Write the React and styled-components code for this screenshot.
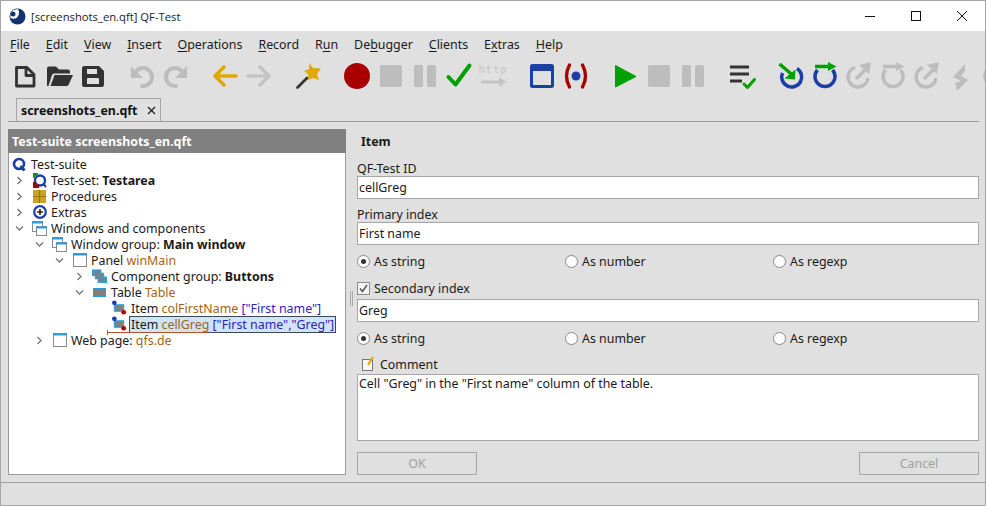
import React from 'react';
import styled, { createGlobalStyle } from 'styled-components';

const GlobalStyle = createGlobalStyle`
    html, body {
        margin: 0;
        padding: 0;
        background: #e0e0e0;
    }
    * {
        box-sizing: border-box;
    }
`
const Window = styled.div`
    width: 986px;
    height: 506px;
    display: flex;
    flex-direction: column;
    border: 1px solid #a6a6a6;
    overflow: hidden;
    background: #e0e0e0;
    color: #1a1a1a;
    font-family: 'Noto Sans', sans-serif;
    font-size: 12.4px;
`
const TitleBar = styled.div`
    height: 30px;
    flex: none;
    display: flex;
    align-items: center;
    background: #fff;
    padding-left: 8px;
    font-family: 'Open Sans', sans-serif;
    font-size: 11.25px;
    color: #222;
`
const TitleText = styled.span`
    margin-left: 5px;
    flex: 1;
`
const WinButton = styled.div`
    width: 46px;
    height: 30px;
    display: flex;
    align-items: center;
    justify-content: center;
`
const MenuBar = styled.div`
    height: 27px;
    flex: none;
    display: flex;
    align-items: center;
    padding: 0 0 1px 9px;
    gap: 16px;
`
const MenuItem = styled.span`
    u {
        text-underline-offset: 2px;
    }
`
const Toolbar = styled.div`
    height: 36px;
    flex: none;
    display: flex;
    align-items: center;
    padding-left: 7px;
    gap: 15px;
    overflow: hidden;
`
const ToolGroup = styled.div`
    display: flex;
    flex: none;
`
const ToolSlot = styled.div`
    width: 34px;
    height: 34px;
    flex: none;
    display: flex;
    align-items: center;
    justify-content: center;
`
const TabBar = styled.div`
    height: 25px;
    flex: none;
    margin: 3px 6px 0 7px;
    padding-left: 8px;
    display: flex;
    align-items: flex-end;
    border-bottom: 1px solid #9a9a9a;
`
const Tab = styled.div`
    width: 145px;
    height: 23px;
    display: flex;
    align-items: center;
    justify-content: space-between;
    padding: 0 4px 0 4px;
    border: 1px solid #a6a6a6;
    border-bottom: none;
    font-weight: 700;
    color: #111;
`
const Main = styled.div`
    flex: 1;
    min-height: 0;
    display: flex;
    padding: 7px 6px 7px 7px;
`
const TreePanel = styled.div`
    width: 338px;
    flex: none;
    display: flex;
    flex-direction: column;
`
const TreeHeader = styled.div`
    height: 24px;
    flex: none;
    background: #808080;
    color: #fff;
    font-weight: 700;
    display: flex;
    align-items: center;
    padding-left: 4px;
`
const TreeBody = styled.div`
    flex: 1;
    background: #fff;
    border: 1px solid #9a9a9a;
    border-top: none;
    padding: 3px 0 0 3px;
`
const Row = styled.div`
    position: relative;
    height: 16px;
    display: flex;
    align-items: center;
    padding-left: ${p => p.$level * 20}px;
    white-space: nowrap;
`
const Chevron = styled.span`
    width: 20px;
    height: 16px;
    flex: none;
    margin-left: -20px;
    padding-right: 6px;
    display: flex;
    align-items: center;
    justify-content: center;
`
const NodeIcon = styled.span`
    width: 15px;
    height: 16px;
    flex: none;
    display: flex;
    align-items: center;
    justify-content: center;
    margin-right: 4px;
`
const Label = styled.span`
    display: inline-block;
    line-height: 15px;
    padding: 0 ${p => (p.$selected ? '1px' : '0')};
    margin-left: ${p => (p.$selected ? '-1px' : '0')};
    background: ${p => (p.$selected ? '#cfe4f7' : 'transparent')};
    outline: ${p => (p.$selected ? '1px solid #3a4a5a' : 'none')};
`
const Ref = styled.span`
    color: #a5630f;
`
const Extra = styled.span`
    color: #3320c4;
`
const DropLine = styled.div`
    position: absolute;
    left: 95px;
    top: 16px;
    width: 101px;
    height: 1px;
    background: #c0502a;
    &::before {
        content: '';
        position: absolute;
        left: 0;
        top: -2px;
        width: 1px;
        height: 5px;
        background: #c0502a;
    }
`
const Splitter = styled.div`
    width: 11px;
    flex: none;
    display: flex;
    align-items: center;
    justify-content: center;
    gap: 1px;
    padding-bottom: 8px;
    span {
        width: 1px;
        height: 15px;
        background: #aaa;
    }
`
const Form = styled.div`
    flex: 1;
    min-width: 0;
    display: flex;
    flex-direction: column;
`
const FormTitle = styled.div`
    height: 24px;
    padding-left: 4px;
    display: flex;
    align-items: center;
    font-weight: 700;
`
const FieldLabel = styled.div`
    height: ${p => p.$h || 23}px;
    flex: none;
    display: flex;
    align-items: center;
    gap: 4px;
    padding-left: ${p => (p.$indent ? '5px' : '0')};
    padding-top: ${p => p.$top || 0}px;
`
const TextInput = styled.div`
    height: 23px;
    flex: none;
    display: flex;
    align-items: center;
    background: #fff;
    border: 1px solid #a6a6a6;
    padding-left: 1px;
`
const CheckBox = styled.span`
    width: 13px;
    height: 13px;
    flex: none;
    display: flex;
    align-items: center;
    justify-content: center;
    border: 1px solid #8a8a8a;
    background: #f4f4f4;
`
const RadioRow = styled.div`
    height: 32px;
    flex: none;
    display: grid;
    grid-template-columns: 208px 208px 206px;
    align-items: center;
`
const RadioOption = styled.label`
    display: flex;
    align-items: center;
    gap: 4px;
`
const RadioDot = styled.span`
    width: 13px;
    height: 13px;
    flex: none;
    border-radius: 50%;
    border: 1px solid #8a8a8a;
    background: #fff;
    display: flex;
    align-items: center;
    justify-content: center;
    &::after {
        content: '';
        width: 5px;
        height: 5px;
        border-radius: 50%;
        background: ${p => (p.$on ? '#333' : 'transparent')};
    }
`
const TextArea = styled.div`
    height: 67px;
    flex: none;
    background: #fff;
    border: 1px solid #a6a6a6;
    padding: 1px;
    line-height: 16px;
`
const ButtonRow = styled.div`
    margin-top: 11px;
    display: flex;
    justify-content: space-between;
`
const FormButton = styled.div`
    width: 120px;
    height: 23px;
    display: flex;
    align-items: center;
    justify-content: center;
    border: 1px solid #a6a6a6;
    color: #a0a0a0;
`
const StatusBar = styled.div`
    height: 23px;
    flex: none;
    border-top: 1px solid #a0a0a0;
`
const HttpText = styled.text`
    font-family: 'DejaVu Sans Mono', monospace;
    font-size: 10px;
    fill: #c4c4c4;
`

const BLUE = '#1b3fa6';
const GREEN = '#00a000';
const DARK = '#333';
const GRAY = '#bdbdbd';
const GOLD = '#e0a800';
const RED = '#a80000';

const Svg = ({ children }) => (
    <svg width="34" height="34" viewBox="0 0 34 34" fill="none">{children}</svg>
)

const NewFile = () => (
    <Svg>
        <path d="M8.500 8.500h10.500l7 7V27H8.500z M18 8.500v8h8" stroke={DARK} strokeWidth="2.800" strokeLinejoin="round" />
    </Svg>
)
const OpenFolder = () => (
    <Svg>
        <path d="M5 27V9.500q0-2 2-2h7l3 3h9q2 0 2 2v2H12q-1.500 0-2 1.500L6.500 27z" fill={DARK} />
        <path d="M12.500 16H31l-4.500 10q-.5 1-2 1H8.500z" fill={DARK} />
    </Svg>
)
const SaveDisk = () => (
    <Svg>
        <path fillRule="evenodd" fill={DARK} d="M6 9q0-2 2-2h15l5 5v14q0 2-2 2H8q-2 0-2-2zM11 10v5h10v-5zM12 19q-1 0-1 1v5h12v-5q0-1-1-1z" />
    </Svg>
)
const Undo = ({ flip }) => (
    <Svg>
        <g transform={flip ? 'matrix(-1 0 0 1 34 0)' : undefined}>
            <path d="M11 12.500Q14 9 18 9A9 9 0 1 1 18 27H15.500" stroke={GRAY} strokeWidth="4" />
            <path d="M6 7v12h12z" fill={GRAY} />
        </g>
    </Svg>
)
const Arrow = ({ color, flip }) => (
    <Svg>
        <g transform={flip ? 'matrix(-1 0 0 1 34 0)' : undefined} stroke={color} strokeWidth="3.600" strokeLinecap="round" strokeLinejoin="round">
            <path d="M7 17h21M16 8l-9 9 9 9" />
        </g>
    </Svg>
)
const Wand = () => (
    <Svg>
        <path d="M6.500 28.500 16 19" stroke={DARK} strokeWidth="2.800" strokeLinecap="round" />
        <path d="M18.500 4 22 9l8 .5-4 5.500 2 6-6-2-5 2 .5-5.500L13 12l5-2z" fill={GOLD} />
    </Svg>
)
const Record = () => (
    <Svg><circle cx="17" cy="17" r="13" fill={RED} /></Svg>
)
const Stop = () => (
    <Svg><rect x="6" y="6" width="22" height="22" rx="2" fill={GRAY} /></Svg>
)
const Pause = () => (
    <Svg>
        <rect x="6" y="6" width="9" height="22" rx="1.500" fill={GRAY} />
        <rect x="19" y="6" width="9" height="22" rx="1.500" fill={GRAY} />
    </Svg>
)
const Check = () => (
    <Svg>
        <path d="M6.500 18l7 7.500L27.500 6.500" stroke={GREEN} strokeWidth="4" strokeLinecap="round" strokeLinejoin="round" />
    </Svg>
)
const Http = () => (
    <Svg>
        <HttpText x="2.500" y="14" textLength="28">http</HttpText>
        <path d="M5 23h20" stroke="#c4c4c4" strokeWidth="3" />
        <path d="M23 18l7 5-7 5z" fill="#c4c4c4" />
    </Svg>
)
const WindowIcon = () => (
    <Svg>
        <rect x="6.500" y="6.500" width="21" height="21" rx="1" stroke={BLUE} strokeWidth="3" />
        <rect x="6" y="6" width="22" height="6" fill={BLUE} />
    </Svg>
)
const Broadcast = () => (
    <Svg>
        <path d="M10.500 6q-6 11 0 22M23.500 6q6 11 0 22" stroke={RED} strokeWidth="3.400" strokeLinecap="round" />
        <circle cx="17" cy="17" r="4.500" fill={BLUE} />
    </Svg>
)
const Play = () => (
    <Svg><path d="M7.500 6.500 28 17.500 7.500 28z" fill={GREEN} stroke={GREEN} strokeLinejoin="round" /></Svg>
)
const ListCheck = () => (
    <Svg>
        <path d="M5 8h19M5 15h19M5 22h12" stroke={DARK} strokeWidth="3" />
        <path d="M19 25l3.500 3.500 7-8" stroke={GREEN} strokeWidth="3" strokeLinecap="round" strokeLinejoin="round" />
    </Svg>
)
const StepIn = () => (
    <Svg>
        <path d="M23 9.500A10 10 0 1 1 8.500 14" stroke={BLUE} strokeWidth="3.500" />
        <path d="M5.500 5l13 11" stroke={GREEN} strokeWidth="3.500" />
        <path d="M21.500 10.500 21 20.500l-10.500-1z" fill={GREEN} />
    </Svg>
)
const StepOver = ({ color = BLUE, arrow = GREEN }) => (
    <Svg>
        <path d="M9.500 11A10 10 0 1 0 24.500 11" stroke={color} strokeWidth="3.500" />
        <path d="M7 7.500h14" stroke={arrow} strokeWidth="3.500" />
        <path d="M20 3l8.500 4.500L20 12z" fill={arrow} />
    </Svg>
)
const StepOut = () => (
    <Svg>
        <path d="M13 8.500A10 10 0 1 0 26 19" stroke={GRAY} strokeWidth="3.500" />
        <path d="M14 20 26 8" stroke={GRAY} strokeWidth="3.500" />
        <path d="M17 6l12-3-2 12z" fill={GRAY} />
    </Svg>
)
const Bolt = () => (
    <Svg>
        <path d="M21 5 9 18l8 4-6 2 2 8 11-11-7-4 4-5z" fill={GRAY} />
    </Svg>
)
const CutOff = () => (
    <Svg><circle cx="17" cy="17" r="10" stroke={GRAY} strokeWidth="3.500" /></Svg>
)

const toolGroups = [
    [<NewFile />, <OpenFolder />, <SaveDisk />],
    [<Undo />, <Undo flip />],
    [<Arrow color={GOLD} />, <Arrow color="#c4c4c4" flip />],
    [<Wand />],
    [<Record />, <Stop />, <Pause />, <Check />, <Http />],
    [<WindowIcon />, <Broadcast />],
    [<Play />, <Stop />, <Pause />],
    [<ListCheck />],
    [<StepIn />, <StepOver />, <StepOut />, <StepOver color={GRAY} arrow={GRAY} />, <StepOut />, <Bolt />, <CutOff />],
]

// text before the mnemonic, the mnemonic, text after it
const menus = [
    ['', 'F', 'ile'], ['', 'E', 'dit'], ['', 'V', 'iew'], ['', 'I', 'nsert'], ['', 'O', 'perations'], ['', 'R', 'ecord'],
    ['R', 'u', 'n'], ['De', 'b', 'ugger'], ['', 'C', 'lients'], ['E', 'x', 'tras'], ['', 'H', 'elp'],
]

const SuiteIcon = () => (
    <svg width="15" height="15" viewBox="0 0 15 15" fill="none">
        <circle cx="7" cy="7" r="5" stroke={BLUE} strokeWidth="2.600" />
        <path d="M8.500 9l4 4.500" stroke={BLUE} strokeWidth="2.800" />
    </svg>
)
const TestSetIcon = () => (
    <svg width="15" height="15" viewBox="0 0 15 15" fill="none">
        <circle cx="8" cy="7.500" r="5" stroke={BLUE} strokeWidth="2.400" />
        <path d="M1 0h5v3H4v2H1z" fill={GREEN} />
        <path d="M1 15V9h2l2 3h2v3z" fill={RED} />
        <path d="M11.500 11l2.500 3" stroke={BLUE} strokeWidth="2" />
    </svg>
)
const ProcIcon = () => (
    <svg width="13" height="13" viewBox="0 0 13 13">
        <rect width="13" height="13" fill="#c9a227" />
        <path d="M6.500 0v13M0 6.500h13" stroke="#9a7410" strokeWidth="1.200" />
    </svg>
)
const ExtrasIcon = () => (
    <svg width="14" height="14" viewBox="0 0 14 14" fill="none">
        <circle cx="7" cy="7" r="5.800" stroke={BLUE} strokeWidth="2.200" />
        <path d="M7 4v6M4 7h6" stroke="#222" strokeWidth="1.600" />
    </svg>
)
const WinGroupIcon = () => (
    <svg width="15" height="15" viewBox="0 0 15 15" fill="none">
        <rect x=".5" y=".5" width="10" height="10" fill="#fff" stroke="#8a8a8a" />
        <path d="M0 1.500h11" stroke="#2a9be0" strokeWidth="2" />
        <rect x="4.500" y="5.500" width="10" height="9" fill="#fff" stroke="#8a8a8a" />
        <path d="M4 6.500h11" stroke="#2a9be0" strokeWidth="2" />
    </svg>
)
const PanelIcon = () => (
    <svg width="14" height="14" viewBox="0 0 14 14" fill="none">
        <rect x=".5" y=".5" width="13" height="13" fill="#fff" stroke="#8a8a8a" />
        <path d="M0 1.500h14" stroke="#2a9be0" strokeWidth="2" />
    </svg>
)
const CompGroupIcon = () => (
    <svg width="16" height="15" viewBox="0 0 16 15" fill="#808080" stroke="#1f9fe8">
        <rect x=".5" y=".5" width="9" height="6" />
        <rect x="3.500" y="4" width="9" height="6" />
        <rect x="6.500" y="8" width="9" height="6" />
    </svg>
)
const TableIcon = () => (
    <svg width="13" height="9" viewBox="0 0 13 9" fill="#808080" stroke="#1f9fe8">
        <rect x=".5" y=".5" width="12" height="8" />
    </svg>
)
const ItemIcon = () => (
    <svg width="16" height="16" viewBox="0 0 16 16" fill="#808080" stroke="#1f9fe8">
        <rect x="2.500" y="4.500" width="10" height="7" />
        <circle cx="2.500" cy="2.500" r="2.500" fill={BLUE} stroke="none" />
        <circle cx="12.500" cy="12.500" r="2.500" fill={RED} stroke="none" />
    </svg>
)
const ChevronIcon = ({ open }) => (
    <svg width="9" height="9" viewBox="0 0 9 9" fill="none">
        <path d={open ? 'M1 2.500l3.500 3.500L8 2.500' : 'M2.500 1L6 4.500 2.500 8'} stroke="#777" strokeWidth="1.400" />
    </svg>
)

const rows = [
    { level: 0, icon: <SuiteIcon />, label: <>Test-suite</> },
    { level: 1, chevron: 'closed', icon: <TestSetIcon />, label: <>Test-set: <b>Testarea</b></> },
    { level: 1, chevron: 'closed', icon: <ProcIcon />, label: <>Procedures</> },
    { level: 1, chevron: 'closed', icon: <ExtrasIcon />, label: <>Extras</> },
    { level: 1, chevron: 'open', icon: <WinGroupIcon />, label: <>Windows and components</> },
    { level: 2, chevron: 'open', icon: <WinGroupIcon />, label: <>Window group: <b>Main window</b></> },
    { level: 3, chevron: 'open', icon: <PanelIcon />, label: <>Panel <Ref>winMain</Ref></> },
    { level: 4, chevron: 'closed', icon: <CompGroupIcon />, label: <>Component group: <b>Buttons</b></> },
    { level: 4, chevron: 'open', icon: <TableIcon />, label: <>Table <Ref>Table</Ref></> },
    { level: 5, icon: <ItemIcon />, label: <>Item <Ref>colFirstName</Ref> <Extra>["First name"]</Extra></> },
    { level: 5, icon: <ItemIcon />, selected: true, label: <>Item <Ref>cellGreg</Ref> <Extra>["First name","Greg"]</Extra></> },
    { level: 2, chevron: 'closed', icon: <PanelIcon />, label: <>Web page: <Ref>qfs.de</Ref></> },
]

const RadioGroup = ({ selected }) => (
    <RadioRow>
        {['As string', 'As number', 'As regexp'].map((text, i) => (
            <RadioOption key={text}>
                <RadioDot $on={i === selected} />
                {text}
            </RadioOption>
        ))}
    </RadioRow>
)

const App = () => {
    return (
        <>
            <GlobalStyle />
            <Window>
                <TitleBar>
                    <svg width="17" height="17" viewBox="0 0 17 17">
                        <circle cx="8.500" cy="8.500" r="8" fill="#14346f" />
                        <path d="M9 1c1.500 3 1.500 6-1 8.500C6.500 11 4 11 1.500 10 1 7 2 3 5 2z" fill="#fff" />
                        <circle cx="4" cy="6" r="2.500" fill="#14346f" />
                    </svg>
                    <TitleText>[screenshots_en.qft] QF-Test</TitleText>
                    <WinButton>
                        <svg width="10" height="10"><path d="M0 5.500h10" stroke="#111" /></svg>
                    </WinButton>
                    <WinButton>
                        <svg width="10" height="10"><rect x=".5" y=".5" width="9" height="9" fill="none" stroke="#111" /></svg>
                    </WinButton>
                    <WinButton>
                        <svg width="10" height="10"><path d="M0 0l10 10M10 0L0 10" stroke="#111" /></svg>
                    </WinButton>
                </TitleBar>

                <MenuBar>
                    {menus.map(([before, key, after], i) => (
                        <MenuItem key={i}>{before}<u>{key}</u>{after}</MenuItem>
                    ))}
                </MenuBar>

                <Toolbar>
                    {toolGroups.map((group, i) => (
                        <ToolGroup key={i}>
                            {group.map((icon, j) => <ToolSlot key={j}>{icon}</ToolSlot>)}
                        </ToolGroup>
                    ))}
                </Toolbar>

                <TabBar>
                    <Tab>
                        screenshots_en.qft
                        <svg width="9" height="9"><path d="M1 1l7 7M8 1L1 8" stroke="#222" strokeWidth="1.300" /></svg>
                    </Tab>
                </TabBar>

                <Main>
                    <TreePanel>
                        <TreeHeader>Test-suite screenshots_en.qft</TreeHeader>
                        <TreeBody>
                            {rows.map((row, i) => (
                                <Row key={i} $level={row.level}>
                                    {row.chevron && <Chevron><ChevronIcon open={row.chevron === 'open'} /></Chevron>}
                                    <NodeIcon>{row.icon}</NodeIcon>
                                    <Label $selected={row.selected}>{row.label}</Label>
                                    {row.selected && <DropLine />}
                                </Row>
                            ))}
                        </TreeBody>
                    </TreePanel>

                    <Splitter><span /><span /></Splitter>

                    <Form>
                        <FormTitle>Item</FormTitle>
                        <FieldLabel $top={7}>QF-Test ID</FieldLabel>
                        <TextInput>cellGreg</TextInput>
                        <FieldLabel $top={7}>Primary index</FieldLabel>
                        <TextInput>First name</TextInput>
                        <RadioGroup selected={0} />
                        <FieldLabel $h={22}>
                            <CheckBox>
                                <svg width="9" height="9"><path d="M1 4.500l2.500 3L8 1" fill="none" stroke="#555" strokeWidth="1.500" /></svg>
                            </CheckBox>
                            Secondary index
                        </FieldLabel>
                        <TextInput>Greg</TextInput>
                        <RadioGroup selected={0} />
                        <FieldLabel $h={20} $indent>
                            <svg width="14" height="16" viewBox="0 0 14 16" fill="none">
                                <rect x=".5" y="3.500" width="10" height="11" fill="#f6f6f6" stroke="#777" />
                                <path d="M6 9l5-8" stroke="#e0a800" strokeWidth="2.200" />
                            </svg>
                            Comment
                        </FieldLabel>
                        <TextArea>Cell "Greg" in the "First name" column of the table.</TextArea>
                        <ButtonRow>
                            <FormButton>OK</FormButton>
                            <FormButton>Cancel</FormButton>
                        </ButtonRow>
                    </Form>
                </Main>

                <StatusBar />
            </Window>
        </>
    );
}

export default App;
